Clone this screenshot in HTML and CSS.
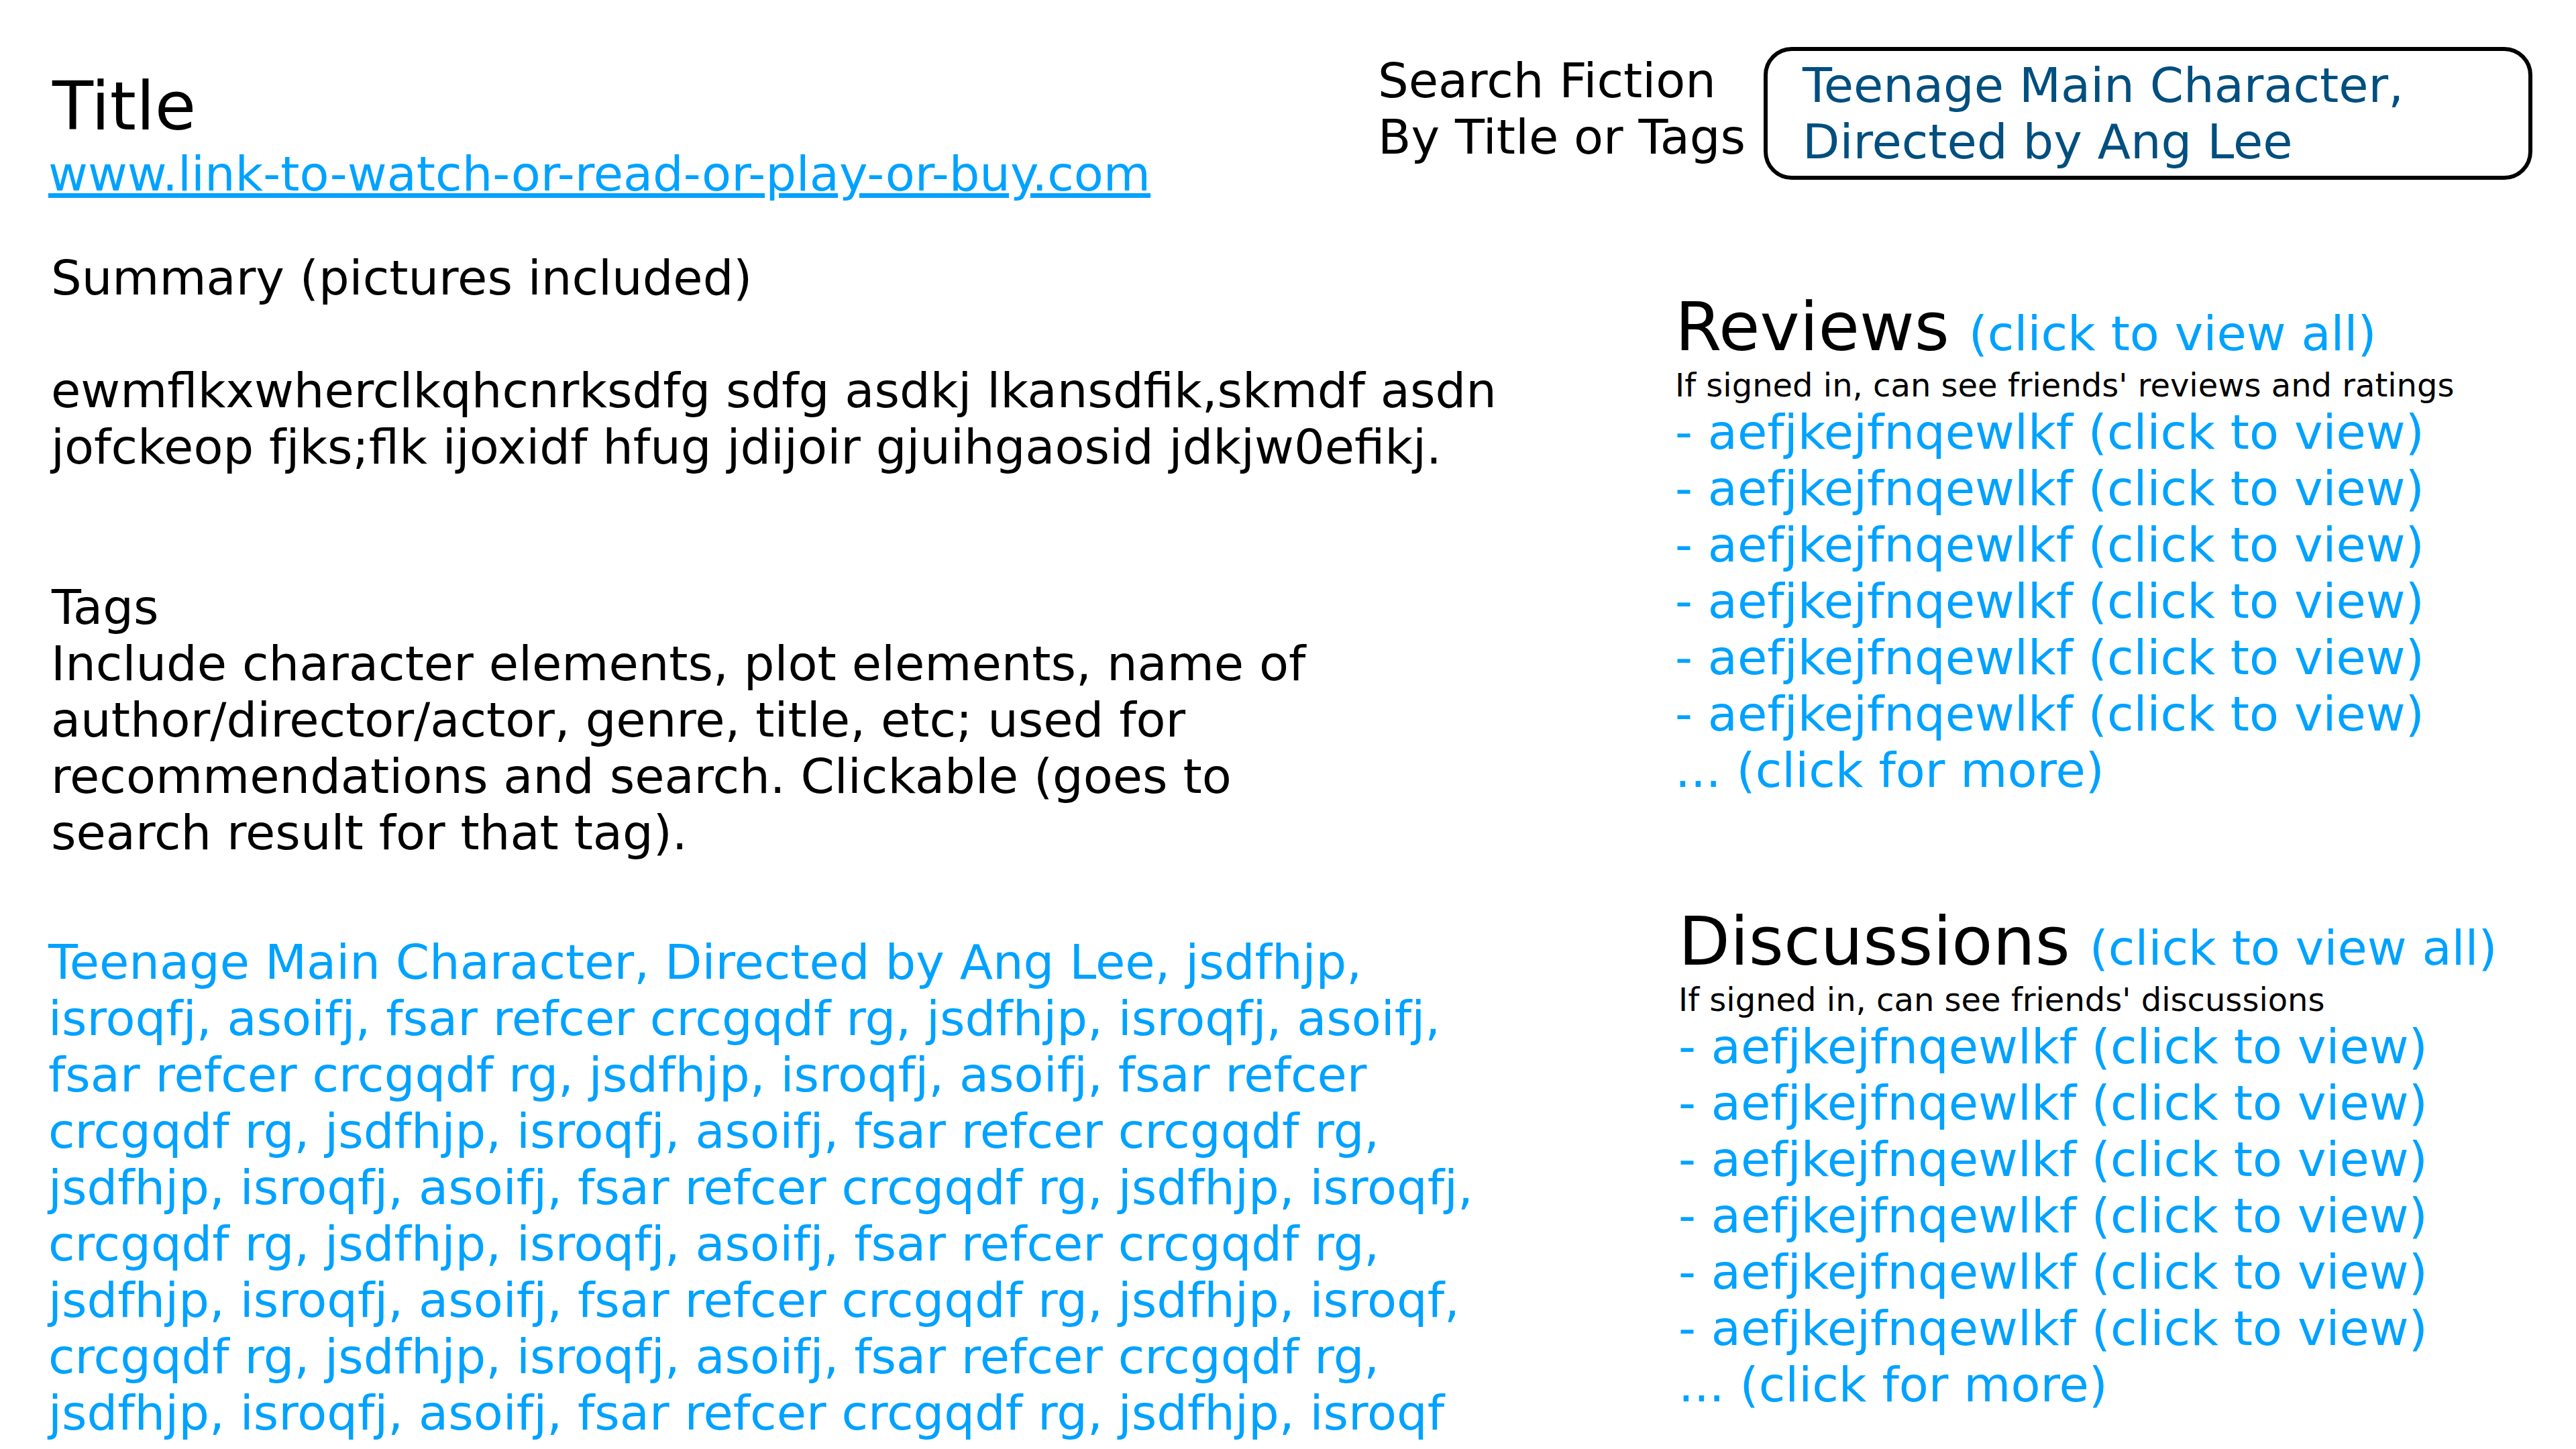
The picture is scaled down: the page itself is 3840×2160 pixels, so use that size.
FILE: index.html
```html
<!DOCTYPE html>
<html lang="en">
<head>
<meta charset="utf-8">
<title>Fiction page mockup</title>
<link rel="stylesheet" href="styles.css">
</head>
<body>
<header class="top">
  <div class="title-block">
    <h1 class="title">Title</h1>
    <a class="watch-link" href="#">www.link-to-watch-or-read-or-play-or-buy.com</a>
  </div>
  <div class="search">
    <div class="search-label">Search Fiction<br>By Title or Tags</div>
    <div class="search-box">Teenage Main Character, Directed by Ang Lee</div>
  </div>
</header>
<main class="content">
  <section class="left">
    <div class="summary-head">Summary (pictures included)</div>
    <p class="summary-body">ewmflkxwherclkqhcnrksdfg sdfg asdkj lkansdfik,skmdf asdn jofckeop fjks;flk ijoxidf hfug jdijoir gjuihgaosid jdkjw0efikj.</p>
    <div class="tags-head">Tags</div>
    <p class="tags-desc">Include character elements, plot elements, name of author/director/actor, genre, title, etc; used for recommendations and search. Clickable (goes to search result for that tag).</p>
    <p class="tag-list">Teenage Main Character, Directed by Ang Lee, jsdfhjp, isroqfj, asoifj, fsar refcer crcgqdf rg, jsdfhjp, isroqfj, asoifj, fsar refcer crcgqdf rg, jsdfhjp, isroqfj, asoifj, fsar refcer crcgqdf rg, jsdfhjp, isroqfj, asoifj, fsar refcer crcgqdf rg, jsdfhjp, isroqfj, asoifj, fsar refcer crcgqdf rg, jsdfhjp, isroqfj, crcgqdf rg, jsdfhjp, isroqfj, asoifj, fsar refcer crcgqdf rg, jsdfhjp, isroqfj, asoifj, fsar refcer crcgqdf rg, jsdfhjp, isroqf, crcgqdf rg, jsdfhjp, isroqfj, asoifj, fsar refcer crcgqdf rg, jsdfhjp, isroqfj, asoifj, fsar refcer crcgqdf rg, jsdfhjp, isroqf</p>
  </section>
  <aside class="right">
    <section class="panel reviews">
      <h2 class="panel-head">Reviews<span class="view-all"> (click to view all)</span></h2>
      <div class="note">If signed in, can see friends' reviews and ratings</div>
      <ul class="items">
        <li>- aefjkejfnqewlkf (click to view)</li>
        <li>- aefjkejfnqewlkf (click to view)</li>
        <li>- aefjkejfnqewlkf (click to view)</li>
        <li>- aefjkejfnqewlkf (click to view)</li>
        <li>- aefjkejfnqewlkf (click to view)</li>
        <li>- aefjkejfnqewlkf (click to view)</li>
        <li>... (click for more)</li>
      </ul>
    </section>
    <section class="panel discussions">
      <h2 class="panel-head">Discussions<span class="view-all"> (click to view all)</span></h2>
      <div class="note">If signed in, can see friends' discussions</div>
      <ul class="items">
        <li>- aefjkejfnqewlkf (click to view)</li>
        <li>- aefjkejfnqewlkf (click to view)</li>
        <li>- aefjkejfnqewlkf (click to view)</li>
        <li>- aefjkejfnqewlkf (click to view)</li>
        <li>- aefjkejfnqewlkf (click to view)</li>
        <li>- aefjkejfnqewlkf (click to view)</li>
        <li>... (click for more)</li>
      </ul>
    </section>
  </aside>
</main>
</body>
</html>
```
FILE: styles.css
```css
html, body {
  margin: 0;
  padding: 0;
  overflow: hidden;
  background: #ffffff;
}

body {
  font-family: "DejaVu Sans", "Liberation Sans", sans-serif;
  font-size: 72px;
  line-height: normal;
  color: #000000;
  width: 3840px;
  height: 2160px;
}

.top {
  display: flex;
  justify-content: space-between;
  align-items: flex-start;
  padding: 70px 65px 0 72px;
}

.title-block {
  padding-top: 30px;
  display: flex;
  flex-direction: column;
  align-items: flex-start;
}

.title {
  margin: 0;
  padding-left: 6px;
  font-size: 100px;
  font-weight: normal;
  line-height: normal;
}

.watch-link {
  display: block;
  margin-top: 0;
  color: #00a2ff;
  text-decoration: underline;
}

.search {
  display: flex;
  align-items: flex-start;
  gap: 27px;
}

.search-label {
  margin-top: 8px;
}

.search-box {
  box-sizing: border-box;
  width: 1146px;
  border: 6px solid #000000;
  border-radius: 42px;
  padding: 9px 40px 9px 52px;
  color: #004f7f;
}

.content {
  display: flex;
  align-items: flex-start;
  padding: 0 65px 0 72px;
}

.left {
  flex: 0 0 2300px;
}

.left p {
  margin: 0;
}

.summary-head {
  margin-top: 71px;
  padding-left: 4px;
}

.left .summary-body {
  margin-top: 84px;
  padding-left: 4px;
  max-width: 2300px;
}

.tags-head {
  margin-top: 155px;
  padding-left: 5px;
}

.tags-desc {
  padding-left: 4px;
  max-width: 1950px;
}

.left .tag-list {
  margin-top: 109px;
  width: 2180px;
  color: #00a2ff;
}

.right {
  flex: 0 0 1278px;
  margin-left: auto;
  margin-top: 128px;
}

.panel-head {
  margin: 0;
  font-size: 100px;
  font-weight: normal;
  line-height: normal;
}

.view-all {
  font-size: 72px;
  padding-left: 6px;
  color: #00a2ff;
}

.note {
  font-size: 48px;
}

.items {
  list-style: none;
  margin: 0;
  padding: 0;
  color: #00a2ff;
}

.discussions {
  margin-top: 155px;
  padding-left: 5px;
}
```
